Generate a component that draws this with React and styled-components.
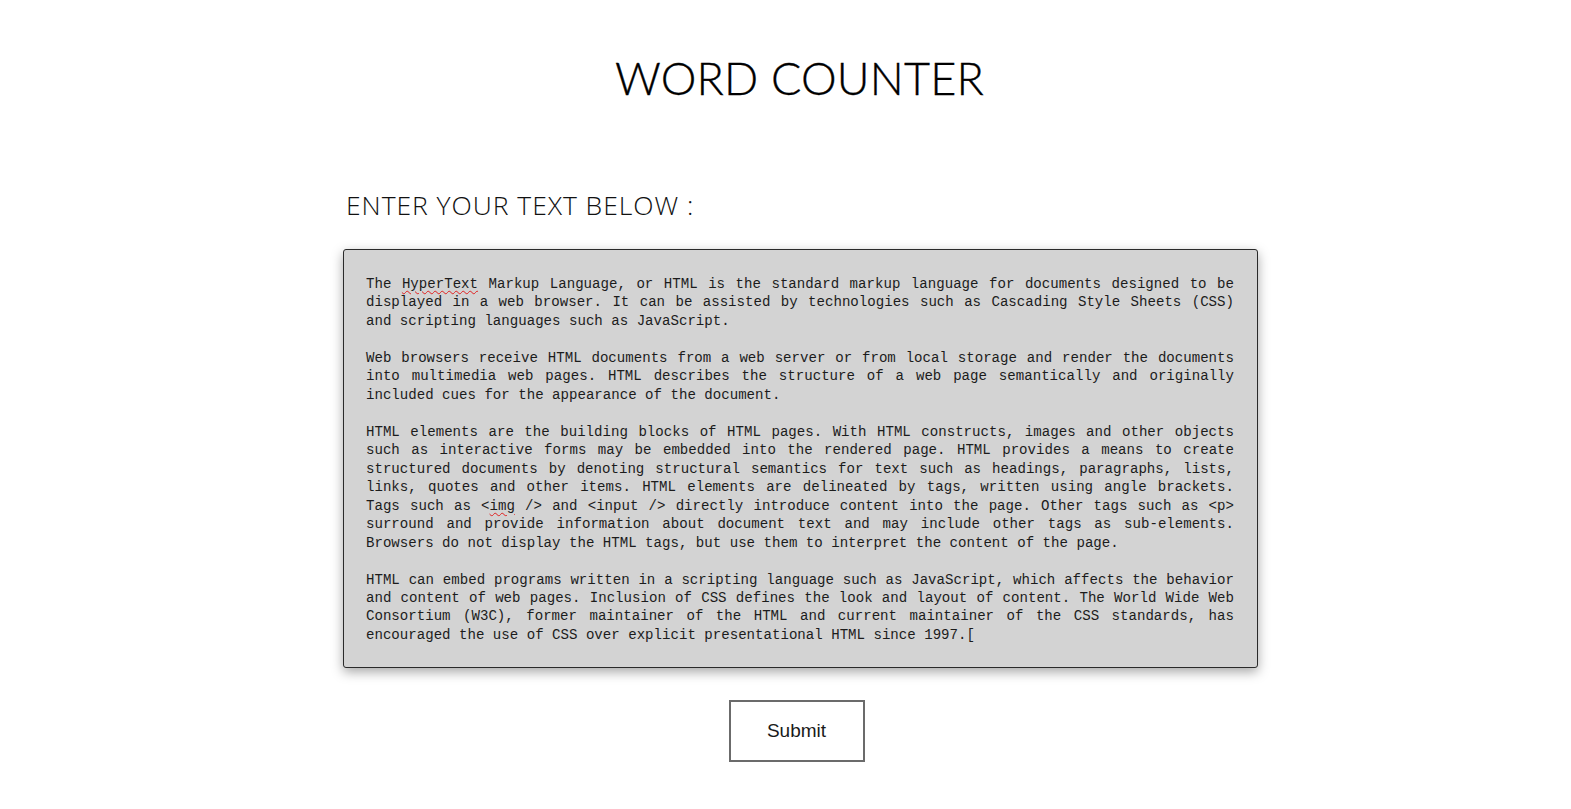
import React from "react";
import styled, { createGlobalStyle } from "styled-components";

const GlobalStyle = createGlobalStyle`
  html, body { margin: 0; padding: 0; background: #ffffff; }
  body { font-family: "Open Sans", "Liberation Sans", sans-serif; }
`;

const Page = styled.main`
  display: flex;
  flex-direction: column;
  align-items: center;
  padding: 0 0 0 30px;
  box-sizing: border-box;
  width: 100%;
  min-height: 809px;
`;

const Title = styled.h1`
  margin: 51px 0 0 0;
  font-family: "Lato", "Open Sans", sans-serif;
  font-weight: 300;
  font-size: 45px;
  line-height: 54px;
  letter-spacing: 0.2px;
  color: #000;
  -webkit-text-stroke: 0.35px #000;
  transform: translateX(-1px);
`;

const Section = styled.section`
  width: 915px;
  display: flex;
  flex-direction: column;
  margin-top: 82px;
`;

const Label = styled.h2`
  margin: 0 0 0 3px;
  font-family: "Open Sans", "Liberation Sans", sans-serif;
  font-weight: 300;
  font-size: 26.5px;
  line-height: 36px;
  letter-spacing: 0.95px;
  color: #111;
`;

const TextBox = styled.div`
  margin-top: 26px;
  box-sizing: border-box;
  width: 915px;
  height: 419px;
  background: #d3d3d3;
  border: 1px solid #2a2a2a;
  border-radius: 3px;
  box-shadow: 0 4px 12px rgba(0, 0, 0, 0.35);
  padding: 25px 23px 20px 22px;
  font-family: "Liberation Mono", "DejaVu Sans Mono", monospace;
  font-size: 14.1px;
  line-height: 18.47px;
  color: #1c1c1c;
  text-align: justify;
  overflow: hidden;
  outline: none;
`;

const Para = styled.p`
  margin: 0 0 18.47px 0;
  &:last-child { margin-bottom: 0; }
`;

const Misspelled = styled.span`
  text-decoration: underline wavy #e02020;
  text-decoration-thickness: 1px;
  text-underline-offset: 2px;
`;

const ButtonRow = styled.div`
  display: flex;
  justify-content: center;
  margin-top: 32px;
  width: 915px;
`;

const SubmitButton = styled.button`
  box-sizing: border-box;
  width: 136px;
  height: 62px;
  margin-right: 8px;
  background: #fff;
  border: 2px solid #6b6b6b;
  font-family: "Liberation Sans", Arial, sans-serif;
  font-size: 19px;
  color: #1a1a1a;
  cursor: pointer;
`;

export default function App() {
  return (
    <>
      <GlobalStyle />
      <Page>
        <Title>WORD COUNTER</Title>
        <Section>
          <Label>ENTER YOUR TEXT BELOW :</Label>
          <TextBox role="textbox" aria-multiline="true" contentEditable suppressContentEditableWarning spellCheck={false}>
            <Para>
              The <Misspelled>HyperText</Misspelled> Markup Language, or HTML is the standard markup language for documents designed to be displayed in a web browser. It can be assisted by technologies such as Cascading Style Sheets (CSS) and scripting languages such as JavaScript.
            </Para>
            <Para>
              Web browsers receive HTML documents from a web server or from local storage and render the documents into multimedia web pages. HTML describes the structure of a web page semantically and originally included cues for the appearance of the document.
            </Para>
            <Para>
              HTML elements are the building blocks of HTML pages. With HTML constructs, images and other objects such as interactive forms may be embedded into the rendered page. HTML provides a means to create structured documents by denoting structural semantics for text such as headings, paragraphs, lists, links, quotes and other items. HTML elements are delineated by tags, written using angle brackets. Tags such as &lt;<Misspelled>img</Misspelled> /&gt; and &lt;input /&gt; directly introduce content into the page. Other tags such as &lt;p&gt; surround and provide information about document text and may include other tags as sub-elements. Browsers do not display the HTML tags, but use them to interpret the content of the page.
            </Para>
            <Para>
              HTML can embed programs written in a scripting language such as JavaScript, which affects the behavior and content of web pages. Inclusion of CSS defines the look and layout of content. The World Wide Web Consortium (W3C), former maintainer of the HTML and current maintainer of the CSS standards, has encouraged the use of CSS over explicit presentational HTML since 1997.[
            </Para>
          </TextBox>
        </Section>
        <ButtonRow>
          <SubmitButton type="button">Submit</SubmitButton>
        </ButtonRow>
      </Page>
    </>
  );
}
